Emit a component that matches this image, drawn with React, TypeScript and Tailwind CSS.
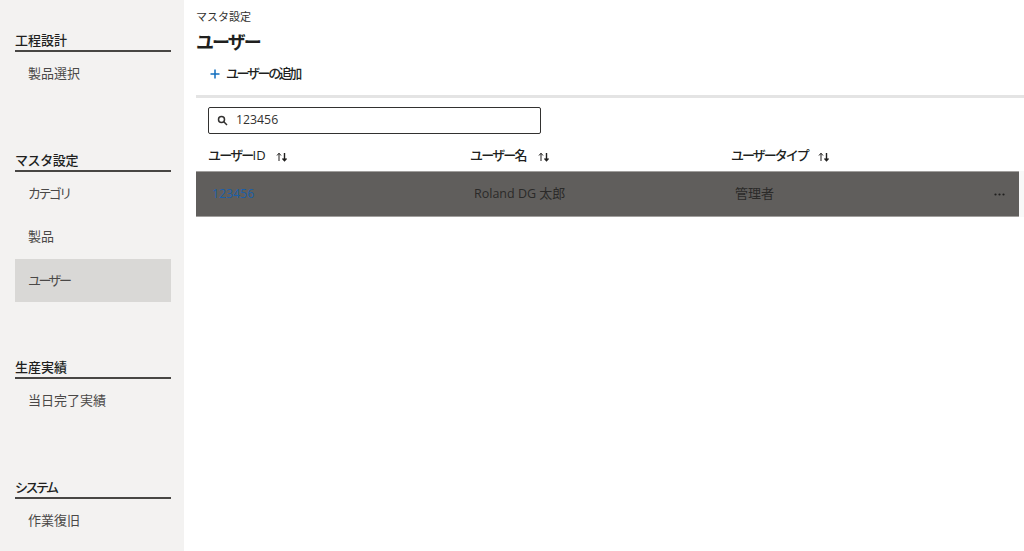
import React from "react";

const font = { fontFamily: '"Open Sans", "Noto Sans CJK JP", sans-serif' };

type Item = { label: string; tight?: boolean };

function Group({ title, items, active, tightTitle }: { title: string; items: Item[]; active?: string; tightTitle?: string }) {
  return (
    <div className="mb-[55.6px]">
      <div className={`h-[21px] border-b-2 border-[#484644] text-[13px] leading-[19px] font-medium text-[#201f1e] ${tightTitle ?? ""}`}>{title}</div>
      {items.map((t) => (
        <div
          key={t.label}
          className={`h-[43.4px] flex items-center pl-[13px] text-[13px] text-[#4a4847] ${t.tight ? "tracking-[-2.6px]" : ""} ${t.label === active ? "bg-[#d9d8d6]" : ""}`}
        >
          {t.label}
        </div>
      ))}
    </div>
  );
}

function SortIcon() {
  return (
    <svg width="12" height="10" viewBox="0 0 12 10" className="ml-[10px] mt-[1px]" fill="none" stroke="#201f1e">
      <path d="M3 9V1.5M1 3.5L3 1.2L5 3.5" strokeWidth="1" />
      <path d="M8.5 1v7.5M6.5 6.5L8.5 8.8L10.5 6.5" strokeWidth="1.4" />
    </svg>
  );
}

function Head({ children, w }: { children: React.ReactNode; w: string }) {
  return (
    <div className={`${w} flex items-center text-[13px] font-medium text-[#201f1e]`}>
      <span>{children}</span>
      <SortIcon />
    </div>
  );
}

export default function App() {
  return (
    <div className="flex h-[551px] w-[1024px] overflow-hidden bg-white" style={font}>
      <aside className="w-[184px] shrink-0 bg-[#f3f2f1] pl-[15px] pr-[13px] pt-[31px]">
        <Group title="工程設計" items={[{ label: "製品選択" }]} />
        <Group
          title="マスタ設定"
          tightTitle="tracking-[-0.4px]"
          items={[{ label: "カテゴリ", tight: true }, { label: "製品" }, { label: "ユーザー", tight: true }]}
          active="ユーザー"
        />
        <Group title="生産実績" items={[{ label: "当日完了実績" }]} />
        <Group title="システム" tightTitle="tracking-[-2.5px]" items={[{ label: "作業復旧" }]} />
      </aside>
      <main className="flex-1 min-w-0 pl-[12px]">
        <div className="pt-[9px] h-[29px] text-[11px] leading-[15px] text-[#323130]">マスタ設定</div>
        <h1 className="h-[27px] pt-[1px] text-[18px] leading-[24px] font-semibold tracking-[-2px] text-[#201f1e]">ユーザー</h1>
        <div className="h-[39px] flex items-center pl-[14px] pb-[4px] text-[13px] font-medium tracking-[-2.4px] text-[#201f1e]">
          <svg width="10" height="10" viewBox="0 0 10 10" className="mr-[6px]" fill="none" stroke="#106ebe" strokeWidth="1.5">
            <path d="M5 0.5v9M0.5 5h9" />
          </svg>
          ユーザーの追加
        </div>
        <div className="h-[2.5px] bg-[#e4e4e4]" />
        <div className="pl-[12px] pt-[9px]">
          <div className="w-[333px] h-[27px] border-[1.5px] border-[#323130] rounded-[2px] flex items-center pl-[8px] text-[12.3px] text-[#323130]">
            <svg width="11" height="11" viewBox="0 0 11 11" className="mr-[8px]" fill="none" stroke="#323130" strokeWidth="1.5">
              <circle cx="4.5" cy="4.5" r="3" />
              <path d="M6.8 6.8L10 10" />
            </svg>
            123456
          </div>
        </div>
        <div className="flex pl-[12px] h-[37px] items-center pt-[8px]">
          <Head w="w-[262px]"><span className="tracking-[-1.8px]">ユーザー</span>ID</Head>
          <Head w="w-[261px]"><span className="tracking-[-1.8px]">ユーザー</span>名</Head>
          <Head w="w-[200px]"><span className="tracking-[-2px]">ユーザータイプ</span></Head>
        </div>
        <div className="flex">
          <div className="flex-1 h-[46px] bg-[#605e5c] border-y border-[#a19f9d] flex items-center pt-[1px] text-[13px] text-[#2b2a29]">
            <span className="w-[278px] pl-[16px] text-[12.3px] text-[#1a5fa8]">123456</span>
            <span className="w-[261px]"><span className="text-[12.5px]">Roland DG </span>太郎</span>
            <span className="flex-1">管理者</span>
            <svg width="11" height="3" viewBox="0 0 11 3" className="mr-[14px]" fill="#201f1e">
              <circle cx="1.5" cy="1.5" r="1.1" />
              <circle cx="5.5" cy="1.5" r="1.1" />
              <circle cx="9.5" cy="1.5" r="1.1" />
            </svg>
          </div>
          <div className="w-[5px] bg-[#f8f8f8]" />
        </div>
      </main>
    </div>
  );
}
